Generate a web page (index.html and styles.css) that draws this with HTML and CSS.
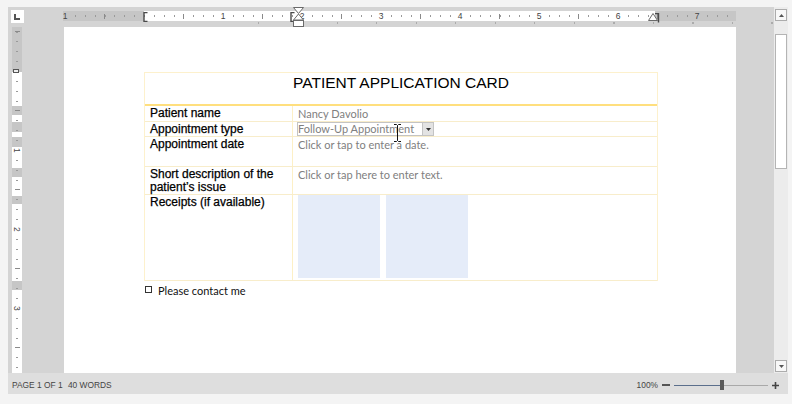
FILE: index.html
```html
<!DOCTYPE html>
<html lang="en">
  <head>
    <meta charset="UTF-8" />
    <meta name="viewport" content="width=device-width, initial-scale=1.0" />
    <title>Patient Application Card</title>
    <link rel="stylesheet" href="styles.css">
  </head>
  <body>
    <div class="app">
      <!-- Horizontal ruler -->
      <div class="ruler-row">
        <div class="tab-select"><span class="tab-l"></span></div>
        <div class="ruler">
          <div class="ruler-scale">
            <span><i class="off">1</i></span>
            <span></span>
            <span><i>1</i></span>
            <span><i>2</i></span>
            <span><i>3</i></span>
            <span><i>4</i></span>
            <span><i>5</i></span>
            <span><i>6</i></span>
            <span><i class="off">7</i></span>
          </div>
        </div>
        <svg class="marker mk-left" width="5" height="10" viewBox="0 0 5 10">
          <path d="M4.5 0.5H1V9.5H4.5" fill="none" stroke="#4a4a4a" stroke-width="1.4" />
        </svg>
        <svg class="marker mk-col" width="5" height="10" viewBox="0 0 5 10">
          <path d="M4.5 0.5H1V9.5H4.5" fill="none" stroke="#4a4a4a" stroke-width="1.4" />
        </svg>
        <svg class="marker mk-indent" width="11" height="20" viewBox="0 0 11 20">
          <path d="M0.5 0.5H10.5L5.5 6.5Z M5.5 7L10.5 13H0.5Z" fill="#fff" stroke="#6a6a6a" />
          <rect x="0.5" y="13.5" width="10" height="6" fill="#fff" stroke="#6a6a6a" />
        </svg>
        <svg class="marker mk-right" width="12" height="10" viewBox="0 0 12 10">
          <path d="M0.5 7.5L5 0.5L9.5 7.5Z" fill="#fff" stroke="#6a6a6a" />
          <path d="M7 0.5H10.5V9.5" fill="none" stroke="#4a4a4a" stroke-width="1.4" />
        </svg>
      </div>

      <!-- Vertical ruler -->
      <div class="side">
        <div class="vruler">
          <span class="vmark"></span>
          <div class="vruler-scale">
            <span></span>
            <span><i>1</i></span>
            <span><i>2</i></span>
            <span><i>3</i></span>
          </div>
        </div>
      </div>

      <!-- Document page -->
      <div class="page">
        <div class="card">
          <div class="card-title">PATIENT APPLICATION CARD</div>

          <div class="field name">
            <div class="label">Patient name</div>
            <div class="value">Nancy Davolio</div>
          </div>

          <div class="field type">
            <div class="label">Appointment type</div>
            <div class="value">
              <div class="combo">
                <span class="combo-text">Follow-Up Appointment</span>
                <span class="combo-btn">
                  <svg width="5" height="3" viewBox="0 0 5 3"><path d="M0 0H5L2.5 3Z" fill="#333" /></svg>
                </span>
                <svg class="ibeam" width="9" height="18" viewBox="0 0 9 18">
                  <path d="M1 0.5H3.5L4.5 1.5L5.5 0.5H8M4.5 1.5V16.5M1 17.5H3.5L4.5 16.5L5.5 17.5H8" fill="none" stroke="#111" />
                </svg>
              </div>
            </div>
          </div>

          <div class="field date">
            <div class="label">Appointment date</div>
            <div class="value">Click or tap to enter a date.</div>
          </div>

          <div class="field issue">
            <div class="label">Short description of the patient’s issue</div>
            <div class="value">Click or tap here to enter text.</div>
          </div>

          <div class="field receipts">
            <div class="label">Receipts (if available)</div>
            <div class="value">
              <div class="receipt"></div>
              <div class="receipt"></div>
            </div>
          </div>
        </div>

        <div class="check">
          <span class="check-box"></span>
          <span>Please contact me</span>
        </div>
      </div>

      <!-- Scrollbar -->
      <div class="scrollbar">
        <div class="sb-btn">
          <svg width="5" height="3" viewBox="0 0 5 3"><path d="M0 3H5L2.5 0Z" fill="#555" /></svg>
        </div>
        <div class="sb-thumb"></div>
        <div class="sb-space"></div>
        <div class="sb-btn">
          <svg width="5" height="3" viewBox="0 0 5 3"><path d="M0 0H5L2.5 3Z" fill="#555" /></svg>
        </div>
      </div>

      <!-- Status bar -->
      <div class="statusbar">
        <span class="status-text">PAGE 1 OF 1 <span class="words">40 WORDS</span></span>
        <div class="zoom">
          <span>100%</span>
          <span class="zoom-minus"></span>
          <div class="slider">
            <span class="slider-fill"></span>
            <span class="slider-thumb"></span>
            <span class="slider-rest"></span>
          </div>
          <svg width="7" height="7" viewBox="0 0 7 7"><path d="M0 3.5H7M3.5 0V7" stroke="#444" stroke-width="1.6" /></svg>
        </div>
      </div>
    </div>
  </body>
</html>
```

FILE: styles.css
```css
* {
  box-sizing: border-box;
}

body {
  margin: 0;
  background: #f4f4f4;
  font-family: "Liberation Sans", Arial, sans-serif;
}

.app {
  margin: 7px 4px 0 8px;
  width: 780px;
  height: 387px;
  display: grid;
  grid-template-columns: 56px 672px 38px 14px;
  grid-template-rows: 20px 346px 21px;
  background: #d4d4d4;
}

/* Horizontal ruler */

.ruler-row {
  grid-column: 1 / 4;
  grid-row: 1;
  position: relative;
  display: flex;
  align-items: flex-start;
}

.tab-select {
  width: 13px;
  height: 13px;
  margin: 3px 0 0 3px;
  background: #fff;
  display: flex;
  align-items: center;
  justify-content: center;
}

.tab-l {
  width: 6px;
  height: 6px;
  margin: 1px 0 0 -1px;
  border-left: 2px solid #555;
  border-bottom: 2px solid #555;
}

.ruler {
  position: relative;
  width: 672px;
  height: 10px;
  margin: 4px 0 0 40px;
  background:
    repeating-linear-gradient(to right, #8a8a8a 0 1px, transparent 1px 79px) 119px 50% / 790px 5px repeat-x,
    repeating-linear-gradient(to right, #9a9a9a 0 1px, transparent 1px 9.875px) 80px 50% / 790px 2px repeat-x,
    linear-gradient(to right, #c6c6c6 0 80px, #fff 80px 591px, #c6c6c6 591px) no-repeat;
}

.ruler::after {
  content: "";
  position: absolute;
  top: 11px;
  left: 194px;
  width: 560px;
  height: 2px;
  background: repeating-linear-gradient(to right, #ababab 0 1px, transparent 1px 39.5px);
}

.ruler-scale {
  position: absolute;
  top: 0;
  left: -38.5px;
  display: flex;
}

.ruler-scale span {
  flex: none;
  width: 79px;
  height: 10px;
  text-align: center;
  font-size: 8.5px;
  line-height: 10px;
  color: #444;
}

.ruler-scale i,
.vruler-scale i {
  font-style: normal;
  background: #fff;
}

.ruler-scale i.off {
  background: #c6c6c6;
}

.marker {
  position: absolute;
}

.mk-left {
  left: 135px;
  top: 5px;
}

.mk-col {
  left: 282px;
  top: 5px;
}

.mk-indent {
  left: 285px;
  top: 0;
}

.mk-right {
  left: 640px;
  top: 6px;
}

/* Vertical ruler */

.side {
  grid-column: 1;
  grid-row: 2;
}

.vruler {
  position: relative;
  width: 10px;
  height: 346px;
  margin-left: 4px;
  overflow: hidden;
  background:
    repeating-linear-gradient(to bottom, #8a8a8a 0 1px, transparent 1px 79px) 50% 83px / 5px 790px repeat-y,
    repeating-linear-gradient(to bottom, #9a9a9a 0 1px, transparent 1px 9.875px) 50% 44px / 2px 790px repeat-y,
    linear-gradient(to bottom,
      #c6c6c6 0 45px, #fff 45px 79px, #c6c6c6 79px 88px, #fff 88px 95px,
      #c6c6c6 95px 105px, #fff 105px 110px, #c6c6c6 110px 120px, #fff 120px 141px,
      #c6c6c6 141px 150px, #fff 150px 169px, #c6c6c6 169px 177px, #fff 177px 254px,
      #c6c6c6 254px 263px, #fff 263px) no-repeat;
}

.vmark {
  position: absolute;
  top: 42px;
  left: 1px;
  width: 6px;
  height: 4px;
  border: 1px solid #555;
  background: #eee;
}

.vruler-scale {
  position: absolute;
  top: 4.5px;
  left: 0;
  display: flex;
  flex-direction: column;
}

.vruler-scale span {
  flex: none;
  width: 10px;
  height: 79px;
  display: flex;
  align-items: center;
  justify-content: center;
  font-size: 8.5px;
  color: #444;
}

.vruler-scale i {
  writing-mode: vertical-rl;
  line-height: 10px;
}

/* Page */

.page {
  grid-column: 2;
  grid-row: 2;
  background: #fff;
  padding: 45px 0 0 80px;
  overflow: hidden;
}

.card {
  width: 514px;
  border: 1px solid #fdf1cd;
  border-bottom: none;
}

.card-title {
  height: 33px;
  padding-top: 1px;
  border-bottom: 2px solid #ffdf7e;
  text-align: center;
  font-size: 15.5px;
  line-height: 17px;
  color: #000;
}

.field {
  display: grid;
  grid-template-columns: 148px 1fr;
  border-bottom: 1px solid #f8edcb;
}

.field.name {
  height: 16px;
}

.field.type {
  height: 15px;
}

.field.date {
  height: 30px;
}

.field.issue {
  height: 28px;
}

.field.receipts {
  height: 86px;
}

.label {
  padding: 1px 0 0 5px;
  border-right: 1px solid #fdf0c6;
  font-size: 12px;
  line-height: 13px;
  color: #000;
  -webkit-text-stroke: 0.25px #000;
}

.value {
  padding: 1px 0 0 5px;
  font-family: Lato, "Liberation Sans", sans-serif;
  font-size: 11px;
  line-height: 13px;
  color: #808080;
}

.type .value {
  padding: 0 0 0 4px;
}

.combo {
  position: relative;
  display: flex;
  width: 137px;
  height: 14px;
  border: 1px solid #c4c4c4;
}

.combo-text {
  flex: 1;
  line-height: 12px;
}

.combo-btn {
  width: 11px;
  background: #e3e3e3;
  border-left: 1px solid #c4c4c4;
  display: flex;
  align-items: center;
  justify-content: center;
}

.ibeam {
  position: absolute;
  left: 95px;
  top: 1px;
}

.receipts .value {
  display: flex;
  gap: 6px;
  padding-top: 0;
}

.receipt {
  width: 82px;
  height: 83px;
  background: #e5ecf9;
}

.check {
  display: flex;
  align-items: flex-start;
  gap: 6px;
  margin-top: 3px;
  font-family: Lato, "Liberation Sans", sans-serif;
  font-size: 11px;
  line-height: 13px;
  color: #111;
}

.check-box {
  width: 7px;
  height: 7px;
  margin: 2px 0 0 1px;
  border: 1px solid #333;
}

/* Scrollbar */

.scrollbar {
  grid-column: 4;
  grid-row: 1 / 3;
  background: #ececec;
  display: flex;
  flex-direction: column;
  align-items: center;
  padding: 2px 0 1px;
}

.sb-btn {
  width: 12px;
  height: 12px;
  border: 1px solid #acacac;
  background: #f8f8f8;
  display: flex;
  align-items: center;
  justify-content: center;
}

.sb-thumb {
  width: 12px;
  height: 135px;
  margin-top: 13px;
  border: 1px solid #b4b4b4;
  background: #fff;
}

.sb-space {
  flex: 1;
}

/* Status bar */

.statusbar {
  grid-column: 1 / -1;
  grid-row: 3;
  display: flex;
  align-items: center;
  padding: 3px 9px 0 4px;
  background: #dedede;
  font-size: 8.4px;
  color: #444;
}

.words {
  margin-left: 3px;
}

.zoom {
  margin-left: auto;
  display: flex;
  align-items: center;
  gap: 4px;
}

.zoom-minus {
  width: 8px;
  height: 2px;
  background: #555;
}

.slider {
  width: 94px;
  display: flex;
  align-items: center;
}

.slider-fill {
  width: 46px;
  height: 1px;
  background: #5b6f8c;
}

.slider-thumb {
  width: 4px;
  height: 10px;
  background: #5a5a5a;
}

.slider-rest {
  flex: 1;
  height: 1px;
  background: #a9a9a9;
}
```
